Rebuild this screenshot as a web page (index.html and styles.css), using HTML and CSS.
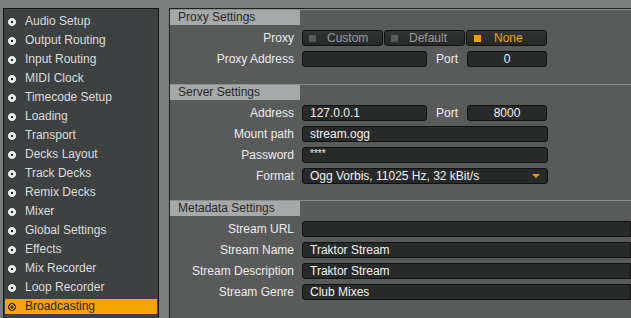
FILE: index.html
```html
<!DOCTYPE html>
<html lang="en">
<head>
    <meta charset="UTF-8">
    <meta name="viewport" content="width=device-width, initial-scale=1.0">
    <title>Preferences - Broadcasting</title>
    <link rel="stylesheet" href="styles.css">
</head>
<body>

    <div class="window">
        <!-- preference categories -->
        <ul class="sidebar">
            <li class="nav-item"><span class="bullet"></span>Audio Setup</li>
            <li class="nav-item"><span class="bullet"></span>Output Routing</li>
            <li class="nav-item"><span class="bullet"></span>Input Routing</li>
            <li class="nav-item"><span class="bullet"></span>MIDI Clock</li>
            <li class="nav-item"><span class="bullet"></span>Timecode Setup</li>
            <li class="nav-item"><span class="bullet"></span>Loading</li>
            <li class="nav-item"><span class="bullet"></span>Transport</li>
            <li class="nav-item"><span class="bullet"></span>Decks Layout</li>
            <li class="nav-item"><span class="bullet"></span>Track Decks</li>
            <li class="nav-item"><span class="bullet"></span>Remix Decks</li>
            <li class="nav-item"><span class="bullet"></span>Mixer</li>
            <li class="nav-item"><span class="bullet"></span>Global Settings</li>
            <li class="nav-item"><span class="bullet"></span>Effects</li>
            <li class="nav-item"><span class="bullet"></span>Mix Recorder</li>
            <li class="nav-item"><span class="bullet"></span>Loop Recorder</li>
            <li class="nav-item active"><span class="bullet"></span>Broadcasting</li>
        </ul>

        <div class="panel">
            <!-- Proxy -->
            <section class="section">
                <div class="section-title">Proxy Settings</div>
                <div class="row">
                    <label class="label">Proxy</label>
                    <div class="toggle-group">
                        <button class="toggle"><span class="led"></span>Custom</button>
                        <button class="toggle"><span class="led"></span>Default</button>
                        <button class="toggle on"><span class="led"></span>None</button>
                    </div>
                </div>
                <div class="row">
                    <label class="label">Proxy Address</label>
                    <div class="field short"></div>
                    <span class="port-label">Port</span>
                    <div class="field port">0</div>
                </div>
            </section>

            <!-- Server -->
            <section class="section">
                <div class="section-title">Server Settings</div>
                <div class="row">
                    <label class="label">Address</label>
                    <div class="field short">127.0.0.1</div>
                    <span class="port-label">Port</span>
                    <div class="field port">8000</div>
                </div>
                <div class="row">
                    <label class="label">Mount path</label>
                    <div class="field medium">stream.ogg</div>
                </div>
                <div class="row">
                    <label class="label">Password</label>
                    <div class="field medium stars">****</div>
                </div>
                <div class="row">
                    <label class="label">Format</label>
                    <div class="field medium select">Ogg Vorbis, 11025 Hz, 32 kBit/s<span class="arrow"></span></div>
                </div>
            </section>

            <!-- Metadata -->
            <section class="section">
                <div class="section-title">Metadata Settings</div>
                <div class="row">
                    <label class="label">Stream URL</label>
                    <div class="field long"></div>
                </div>
                <div class="row">
                    <label class="label">Stream Name</label>
                    <div class="field long">Traktor Stream</div>
                </div>
                <div class="row">
                    <label class="label">Stream Description</label>
                    <div class="field long">Traktor Stream</div>
                </div>
                <div class="row">
                    <label class="label">Stream Genre</label>
                    <div class="field long">Club Mixes</div>
                </div>
            </section>
        </div>
    </div>

</body>
</html>
```

FILE: styles.css
```css
/* Traktor style preferences window */
body {
    margin: 0;
    height: 318px;
    overflow: hidden;
    background-color: #7b7d7d;
    font-family: "Liberation Sans", Arial, sans-serif;
    font-size: 12px;
}

.window {
    display: flex;
    padding: 8px 0 0 3px;
    gap: 10px;
    height: 320px;
}

/* Sidebar */
.sidebar {
    display: flex;
    flex-direction: column;
    gap: 4px;
    list-style: none;
    margin: 0;
    padding: 5px 1px 0;
    width: 152px;
    flex-shrink: 0;
    background-color: #3e4141;
    border: 1px solid #151616;
    border-bottom: none;
}

.nav-item {
    display: flex;
    align-items: center;
    height: 15px;
    padding-left: 3px;
    color: #dcdcdc;
    line-height: 15px;
}

.bullet {
    width: 8px;
    height: 8px;
    margin-right: 9px;
    border-radius: 50%;
    background: radial-gradient(circle, #2a2c2c 0 1.3px, #ececec 1.6px 3.8px, transparent 4px);
}

.nav-item.active {
    background-color: #f5a400;
    color: #1e1e1e;
}

.nav-item.active .bullet {
    background: radial-gradient(circle, #2a2a2a 0 1.4px, #f5a400 1.7px 2.6px, #2a2a2a 2.9px 3.8px, transparent 4px);
}

/* Settings panel */
.panel {
    flex: 1;
    background-color: #595a5a;
    border-top: 1px solid #1e1f1f;
    border-left: 1px solid #1e1f1f;
}

.section {
    border-top: 1px solid #8d8f8f;
    padding-bottom: 16px;
}

.section:first-child {
    padding-bottom: 17px;
}

.section-title {
    width: 122px;
    height: 15px;
    line-height: 15px;
    padding-left: 8px;
    background-color: #a6a9a9;
    color: #272828;
    margin-bottom: 5px;
}

.row {
    display: flex;
    align-items: center;
    height: 16px;
    margin-bottom: 5px;
}

.row:last-child {
    margin-bottom: 0;
}

.label {
    width: 124px;
    margin-right: 8px;
    text-align: right;
    color: #ececec;
}

.field {
    box-sizing: border-box;
    height: 16px;
    line-height: 14px;
    padding: 0 7px;
    background-color: #282a2a;
    border: 1px solid #101111;
    border-radius: 3px;
    color: #f2f2f2;
    white-space: nowrap;
}

.field.short { width: 125px; }
.field.medium { width: 246px; }
.field.long { width: 329px; border-radius: 3px 0 0 3px; }

.field.port {
    width: 80px;
    text-align: center;
}

.field.stars {
    font-size: 10px;
    line-height: 12px;
}

.port-label {
    width: 40px;
    text-align: center;
    color: #ececec;
}

.select {
    position: relative;
}

.arrow {
    position: absolute;
    right: 7px;
    top: 5px;
    border-left: 4px solid transparent;
    border-right: 4px solid transparent;
    border-top: 4px solid #f5a000;
}

/* Proxy buttons */
.toggle-group {
    display: flex;
    gap: 1px;
}

.toggle {
    display: flex;
    align-items: center;
    box-sizing: border-box;
    width: 81px;
    height: 16px;
    padding: 0 0 0 6px;
    font-family: inherit;
    font-size: 12px;
    color: #9a9c9c;
    background: linear-gradient(#333535, #262828);
    border: 1px solid #101111;
    border-radius: 3px;
}

.led {
    width: 7px;
    height: 7px;
    background-color: #595b5b;
    margin-right: 11px;
}

.toggle.on {
    color: #f0a200;
    padding-left: 7px;
}

.toggle.on .led {
    background-color: #f5a000;
    margin-right: 13px;
}
```
